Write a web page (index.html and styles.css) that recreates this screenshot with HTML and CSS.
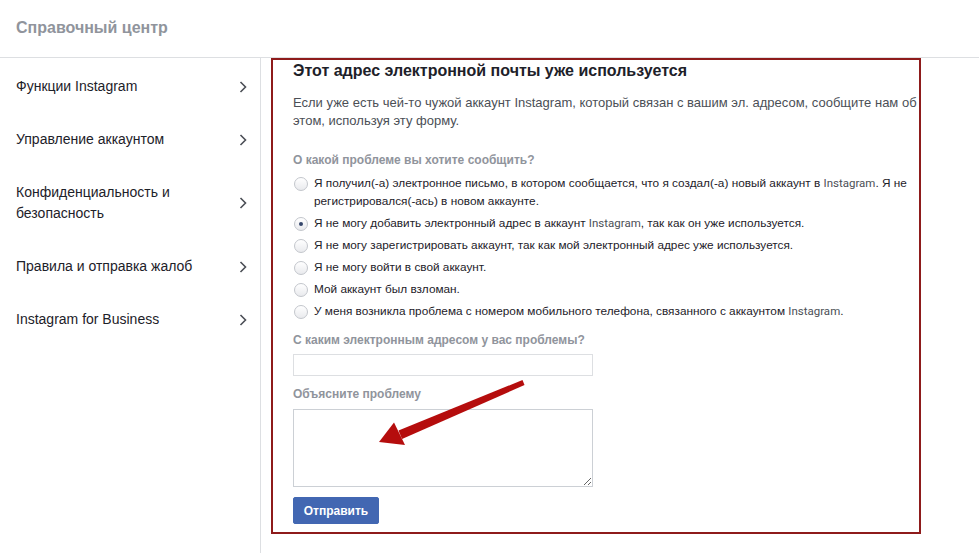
FILE: index.html
```html
<!DOCTYPE html>
<html lang="ru">
<head>
    <meta charset="UTF-8">
    <meta name="viewport" content="width=device-width, initial-scale=1.0">
    <title>Справочный центр</title>
    <link rel="stylesheet" href="styles.css">
</head>
<body>
    <div class="header">Справочный центр</div>

    <div class="layout">
        <div class="sidebar">
            <a class="nav-item" href="#">
                <span>Функции Instagram</span>
                <svg class="chevron" width="8" height="12" viewBox="0 0 8 12"><path d="M1.5 1 L6.5 6 L1.5 11"/></svg>
            </a>
            <a class="nav-item" href="#">
                <span>Управление аккаунтом</span>
                <svg class="chevron" width="8" height="12" viewBox="0 0 8 12"><path d="M1.5 1 L6.5 6 L1.5 11"/></svg>
            </a>
            <a class="nav-item" href="#">
                <span>Конфиденциальность и<br>безопасность</span>
                <svg class="chevron" width="8" height="12" viewBox="0 0 8 12"><path d="M1.5 1 L6.5 6 L1.5 11"/></svg>
            </a>
            <a class="nav-item" href="#">
                <span>Правила и отправка жалоб</span>
                <svg class="chevron" width="8" height="12" viewBox="0 0 8 12"><path d="M1.5 1 L6.5 6 L1.5 11"/></svg>
            </a>
            <a class="nav-item" href="#">
                <span>Instagram for Business</span>
                <svg class="chevron" width="8" height="12" viewBox="0 0 8 12"><path d="M1.5 1 L6.5 6 L1.5 11"/></svg>
            </a>
        </div>

        <div class="main">
            <div class="form-box">
                <h1>Этот адрес электронной почты уже используется</h1>
                <p class="intro">Если уже есть чей-то чужой аккаунт Instagram, который связан с вашим эл. адресом, сообщите нам об этом, используя эту форму.</p>

                <form id="reportForm">
                    <div class="field-label question-label">О какой проблеме вы хотите сообщить?</div>
                    <div class="radio-list">
                        <label class="radio-row">
                            <span class="radio"></span>
                            <span>Я получил(-а) электронное письмо, в котором сообщается, что я создал(-а) новый аккаунт в <span class="brand">Instagram</span>. Я не регистрировался(-ась) в новом аккаунте.</span>
                        </label>
                        <label class="radio-row">
                            <span class="radio checked"></span>
                            <span>Я не могу добавить электронный адрес в аккаунт <span class="brand">Instagram</span>, так как он уже используется.</span>
                        </label>
                        <label class="radio-row">
                            <span class="radio"></span>
                            <span>Я не могу зарегистрировать аккаунт, так как мой электронный адрес уже используется.</span>
                        </label>
                        <label class="radio-row">
                            <span class="radio"></span>
                            <span>Я не могу войти в свой аккаунт.</span>
                        </label>
                        <label class="radio-row">
                            <span class="radio"></span>
                            <span>Мой аккаунт был взломан.</span>
                        </label>
                        <label class="radio-row">
                            <span class="radio"></span>
                            <span>У меня возникла проблема с номером мобильного телефона, связанного с аккаунтом <span class="brand">Instagram</span>.</span>
                        </label>
                    </div>

                    <div class="field-label email-label">С каким электронным адресом у вас проблемы?</div>
                    <input type="text" class="email-input">

                    <div class="field-label explain-label">Объясните проблему</div>
                    <textarea class="explain-input"></textarea>

                    <button type="submit">Отправить</button>
                </form>

                <!-- annotation arrow -->
                <svg class="arrow" width="300" height="420" viewBox="0 0 300 420">
                    <polygon points="249.5,320 251.5,325 129,379 125.5,370.5" fill="#b50d0d"/>
                    <polygon points="106,382 121,362.5 132,385" fill="#b50d0d"/>
                </svg>
            </div>
        </div>
    </div>
</body>
</html>
```

FILE: styles.css
```css
body {
    margin: 0;
    font-family: "Liberation Sans", Arial, sans-serif;
    color: #1d2129;
    background: #fff;
}
.header {
    height: 58px;
    box-sizing: border-box;
    padding: 18px 16px 0;
    border-bottom: 1px solid #dddfe2;
    font-size: 16px;
    font-weight: bold;
    line-height: 19px;
    color: #90949c;
}
.layout {
    display: flex;
}
.sidebar {
    width: 261px;
    min-height: 495px;
    padding-top: 2px;
    box-sizing: border-box;
    border-right: 1px solid #dddfe2;
}
.nav-item {
    display: flex;
    justify-content: space-between;
    align-items: center;
    padding: 16px 13px 16px 16px;
    font-size: 14px;
    line-height: 21px;
    color: #1d2129;
    text-decoration: none;
}
.chevron path {
    fill: none;
    stroke: #4b4f56;
    stroke-width: 1.6;
}
.main {
    padding-left: 10px;
}
.form-box {
    position: relative;
    width: 650px;
    height: 476px;
    box-sizing: border-box;
    border: 2px solid #8e1b1b;
    padding: 0 0 0 20px;
}
h1 {
    margin: 0;
    font-size: 16px;
    line-height: 20px;
    padding-top: 1px;
    color: #1d2129;
}
.intro {
    margin: 13px 0 0;
    font-size: 13px;
    line-height: 18px;
    color: #4b4f56;
}
.field-label {
    font-size: 12px;
    font-weight: bold;
    line-height: 16px;
    color: #90949c;
}
.question-label {
    margin-top: 22px;
}
.radio-list {
    margin-top: 6px;
}
.radio-row {
    display: flex;
    align-items: flex-start;
    gap: 6px;
    font-size: 11.8px;
    line-height: 18px;
    color: #1d2129;
    margin-bottom: 4px;
    padding-left: 1px;
    padding-right: 8px;
}
.radio {
    flex: none;
    width: 12px;
    height: 12px;
    margin-top: 3px;
    border: 1px solid #c3c6cc;
    border-radius: 50%;
    background: linear-gradient(#ffffff, #e9eaed);
    position: relative;
}
.radio.checked::after {
    content: "";
    position: absolute;
    left: 4px;
    top: 4px;
    width: 4px;
    height: 4px;
    border-radius: 50%;
    background: #35466b;
}
.brand {
    font-family: Roboto, "Open Sans", sans-serif;
    font-size: 11.5px;
    color: #4b4f56;
}
.email-label {
    margin-top: 12px;
}
.email-input {
    display: block;
    width: 300px;
    height: 22px;
    box-sizing: border-box;
    margin-top: 6px;
    border: 1px solid #dddfe2;
    padding: 3px;
}
.explain-label {
    margin-top: 10px;
}
.explain-input {
    display: block;
    width: 300px;
    height: 78px;
    box-sizing: border-box;
    margin-top: 7px;
    border: 1px solid #ccd0d5;
    padding: 3px;
}
button {
    margin-top: 10px;
    width: 86px;
    height: 27px;
    background-color: #4267b2;
    border: 1px solid #4267b2;
    border-radius: 2px;
    color: white;
    font-family: "Liberation Sans", Arial, sans-serif;
    font-size: 12px;
    font-weight: bold;
    cursor: pointer;
}
.arrow {
    position: absolute;
    left: 0;
    top: 0;
    pointer-events: none;
}
```
